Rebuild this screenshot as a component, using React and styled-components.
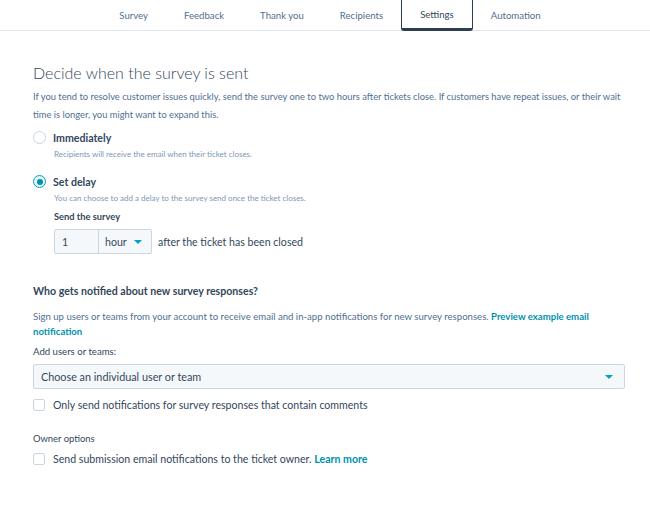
import React from 'react';
import styled, { createGlobalStyle } from 'styled-components';

const GlobalStyle = createGlobalStyle`
  html, body {
    margin: 0;
    padding: 0;
    background: #fff;
  }
  body {
    font-family: Lato, "Liberation Sans", sans-serif;
    color: #33475b;
  }
`;

const Page = styled.div`
  width: 650px;
  height: 506px;
  overflow: hidden;
  background: #fff;
`;

const TabBar = styled.nav`
  display: flex;
  justify-content: center;
  height: 30px;
  border-bottom: 1px solid #dfe3eb;
  padding-left: 10px;
`;

const Tab = styled.div`
  display: flex;
  align-items: center;
  padding: 0 ${(p) => (p.$active ? '18px' : '17px')};
  margin-top: ${(p) => (p.$active ? '-1px' : '0')};
  height: ${(p) => (p.$active ? '32px' : '30px')};
  font-size: 9.6px;
  color: ${(p) => (p.$active ? '#33475b' : '#516f90')};
  box-sizing: border-box;
  border: ${(p) => (p.$active ? '1px solid #2d3e50' : '1px solid transparent')};
  border-bottom: ${(p) => (p.$active ? '3px solid #2d3e50' : 'none')};
  border-radius: 0 0 3px 3px;
  background: #fff;
`;

const Content = styled.main`
  padding: 31px 25px 0 33px;
`;

const Title = styled.h1`
  margin: 0;
  font-size: 16px;
  font-weight: 300;
  color: #33475b;
  line-height: 22px;
`;

const Text = styled.p`
  max-width: 588px;
  margin: ${(p) => p.$margin || '0'};
  font-size: ${(p) => p.$size || '9.35px'};
  line-height: ${(p) => p.$lh || '18px'};
  color: ${(p) => p.$color || '#516f90'};
`;

const Link = styled.a`
  color: #0091ae;
  font-weight: 700;
  text-decoration: none;
`;

const RadioRow = styled.label`
  display: flex;
  align-items: center;
  gap: 7px;
  margin-top: ${(p) => p.$top || '0'};
`;

const Radio = styled.span`
  width: 13px;
  height: 13px;
  box-sizing: border-box;
  border-radius: 50%;
  border: 1px solid ${(p) => (p.$checked ? '#00a4bd' : '#cbd6e2')};
  background: ${(p) => (p.$checked ? '#e5f5f8' : '#fff')};
  display: flex;
  align-items: center;
  justify-content: center;
  flex-shrink: 0;
  &::after {
    content: '';
    display: ${(p) => (p.$checked ? 'block' : 'none')};
    width: 6px;
    height: 6px;
    border-radius: 50%;
    background: #0091ae;
  }
`;

const OptionLabel = styled.span`
  font-size: 10.6px;
  font-weight: 700;
  color: #33475b;
`;

const Hint = styled.div`
  margin: 5px 0 0 21px;
  font-size: 8px;
  color: #7c98b6;
`;

const Indented = styled.div`
  margin-left: 21px;
`;

const FieldLabel = styled.div`
  font-size: 9.3px;
  font-weight: 700;
  color: #33475b;
  margin: ${(p) => p.$margin || '0'};
`;

const InputGroup = styled.div`
  display: flex;
  align-items: center;
  gap: 6px;
  margin-top: 7px;
`;

const Joined = styled.div`
  display: flex;
  height: 25px;
  border: 1px solid #cbd6e2;
  border-radius: 2px;
  background: #f5f8fa;
  box-sizing: border-box;
`;

const NumberBox = styled.div`
  width: 44px;
  display: flex;
  align-items: center;
  padding-left: 7px;
  box-sizing: border-box;
  font-size: 10.6px;
  color: #33475b;
  border-right: 1px solid #cbd6e2;
`;

const UnitBox = styled.div`
  width: 52px;
  display: flex;
  align-items: center;
  gap: 7px;
  padding-left: 6px;
  box-sizing: border-box;
  font-size: 10.6px;
  color: #33475b;
`;

const Caret = styled.span`
  width: 0;
  height: 0;
  border-left: 4px solid transparent;
  border-right: 4px solid transparent;
  border-top: 4px solid #00a4bd;
`;

const AfterText = styled.span`
  font-size: 10.6px;
  color: #33475b;
`;

const SectionTitle = styled.h2`
  margin: 31px 0 0;
  font-size: 10.6px;
  font-weight: 700;
  color: #33475b;
`;

const Select = styled.div`
  display: flex;
  align-items: center;
  justify-content: space-between;
  height: 25px;
  margin-top: 6px;
  padding: 0 11px 0 7px;
  border: 1px solid #cbd6e2;
  border-radius: 2px;
  background: #f5f8fa;
  box-sizing: border-box;
  font-size: 10.8px;
  color: #33475b;
`;

const CheckRow = styled.label`
  display: flex;
  align-items: center;
  gap: 8px;
  margin-top: ${(p) => p.$top || '0'};
  font-size: 10.6px;
  color: #33475b;
`;

const Box = styled.span`
  width: 12px;
  height: 12px;
  box-sizing: border-box;
  border: 1px solid #cbd6e2;
  border-radius: 2px;
  background: #fff;
  flex-shrink: 0;
`;

const SmallLabel = styled.div`
  margin-top: 22px;
  font-size: 9.4px;
  color: #33475b;
`;

const tabs = ['Survey', 'Feedback', 'Thank you', 'Recipients', 'Settings', 'Automation'];

export default function App() {
  return (
    <Page>
      <GlobalStyle />
      <TabBar>
        {tabs.map((t) => (
          <Tab key={t} $active={t === 'Settings'}>
            {t}
          </Tab>
        ))}
      </TabBar>
      <Content>
        <Title>Decide when the survey is sent</Title>
        <Text $margin="4px 0 0">
          If you tend to resolve customer issues quickly, send the survey one to two hours after
          tickets close. If customers have repeat issues, or their wait time is longer, you might
          want to expand this.
        </Text>

        <RadioRow $top="7px">
          <Radio />
          <OptionLabel>Immediately</OptionLabel>
        </RadioRow>
        <Hint>Recipients will receive the email when their ticket closes.</Hint>

        <RadioRow $top="16px">
          <Radio $checked />
          <OptionLabel>Set delay</OptionLabel>
        </RadioRow>
        <Hint>You can choose to add a delay to the survey send once the ticket closes.</Hint>

        <Indented>
          <FieldLabel $margin="8px 0 0">Send the survey</FieldLabel>
          <InputGroup>
            <Joined>
              <NumberBox>1</NumberBox>
              <UnitBox>
                hour <Caret />
              </UnitBox>
            </Joined>
            <AfterText>after the ticket has been closed</AfterText>
          </InputGroup>
        </Indented>

        <SectionTitle>Who gets notified about new survey responses?</SectionTitle>
        <Text $margin="12px 0 0" $size="9.6px" $lh="15px">
          Sign up users or teams from your account to receive email and in-app notifications for
          new survey responses. <Link href="#">Preview example email notification</Link>
        </Text>
        <Text $margin="7px 0 0" $size="9.6px" $lh="12px" $color="#33475b">
          Add users or teams:
        </Text>
        <Select>
          Choose an individual user or team
          <Caret />
        </Select>
        <CheckRow $top="10px">
          <Box />
          Only send notifications for survey responses that contain comments
        </CheckRow>

        <SmallLabel>Owner options</SmallLabel>
        <CheckRow $top="9px">
          <Box />
          <span>
            Send submission email notifications to the ticket owner.{' '}
            <Link href="#">Learn more</Link>
          </span>
        </CheckRow>
      </Content>
    </Page>
  );
}
